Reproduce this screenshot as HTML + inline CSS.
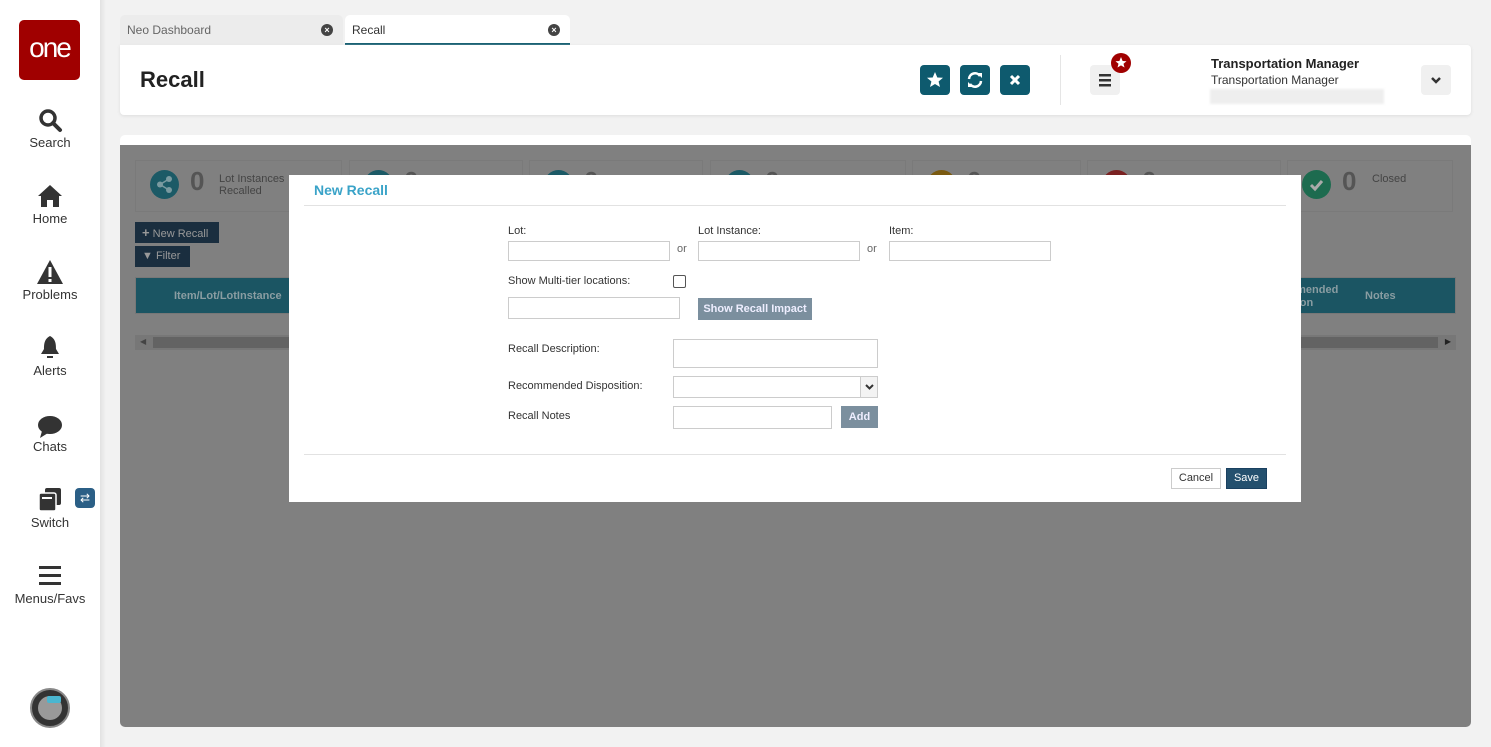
<!DOCTYPE html>
<html><head><meta charset="utf-8"><style>
*{box-sizing:border-box;margin:0;padding:0}
body{width:1491px;height:747px;background:#f2f2f2;font-family:"Liberation Sans",sans-serif;position:relative;overflow:hidden;color:#333}
.abs{position:absolute}
.side{left:0;top:0;width:100px;height:747px;background:#fff}
.nav{position:absolute;left:0;width:100px;text-align:center;font-size:13px;color:#333}
.tab{top:15px;height:30px;border-radius:5px 5px 0 0;font-size:12px;line-height:30px;padding-left:7px}
.x{position:absolute;right:10px;top:9px;width:12px;height:12px;border-radius:50%;background:#444;color:#fff;font-size:9px;line-height:12px;text-align:center;font-weight:bold}
.card{background:#fff}
.hb{top:65px;width:30px;height:30px;border-radius:4px;background:#0e5a6e}
.stat{top:160px;height:52px;border:1px solid #7a7a7a}
.circ{position:absolute;left:14px;top:9px;width:29px;height:29px;border-radius:50%}
.zero{position:absolute;left:54px;top:5px;font-size:26px;font-weight:bold;color:#555}
.lbl{font-size:11px;color:#333}
.inp{position:absolute;border:1px solid #ccc;background:#fff;height:20px}
</style></head><body>
<div class="abs side"></div>
<div class="abs" style="left:19px;top:20px;width:61px;height:60px;background:#a00000;border-radius:5px;color:#fff;font-size:28px;text-align:center;line-height:56px;letter-spacing:-2px">one</div>
<svg class="abs" style="left:38px;top:108px" width="26" height="26" viewBox="0 0 26 26"><circle cx="10" cy="10" r="7" stroke="#333" stroke-width="3.5" fill="none"/><line x1="15" y1="15" x2="22" y2="22" stroke="#333" stroke-width="4" stroke-linecap="round"/></svg>
<div class="nav" style="top:135px">Search</div>
<svg class="abs" style="left:37px;top:184px" width="26" height="24" viewBox="0 0 26 24"><path d="M13 1 L1 12 L4 12 L4 23 L10 23 L10 16 L16 16 L16 23 L22 23 L22 12 L25 12 Z" fill="#333"/></svg>
<div class="nav" style="top:211px">Home</div>
<svg class="abs" style="left:36px;top:259px" width="28" height="26" viewBox="0 0 28 26"><path d="M14 1 L27 25 L1 25 Z" fill="#333"/><rect x="12.5" y="8" width="3" height="10" fill="#fff"/><rect x="12.5" y="20" width="3" height="3" fill="#fff"/></svg>
<div class="nav" style="top:287px">Problems</div>
<svg class="abs" style="left:39px;top:335px" width="22" height="26" viewBox="0 0 22 26"><path d="M11 1 C5 4 5 10 5 14 L2 19 L20 19 L17 14 C17 10 17 4 11 1Z" fill="#333"/><rect x="8" y="21" width="6" height="2" fill="#333"/></svg>
<div class="nav" style="top:363px">Alerts</div>
<svg class="abs" style="left:37px;top:415px" width="26" height="24" viewBox="0 0 26 24"><ellipse cx="13" cy="10" rx="12" ry="9" fill="#333"/><path d="M5 16 L3 23 L11 18Z" fill="#333"/></svg>
<div class="nav" style="top:439px">Chats</div>
<svg class="abs" style="left:37px;top:487px" width="26" height="26" viewBox="0 0 26 26"><rect x="8" y="1" width="16" height="17" rx="2" fill="#333"/><rect x="2" y="6" width="17" height="18" rx="2" fill="#333" stroke="#fff" stroke-width="1.5"/><rect x="5" y="10" width="10" height="2" fill="#fff"/></svg>
<div class="abs" style="left:75px;top:488px;width:20px;height:20px;border-radius:4px;background:#2b5f86;color:#fff;font-size:12px;text-align:center;line-height:20px">⇄</div>
<div class="nav" style="top:515px">Switch</div>
<svg class="abs" style="left:39px;top:566px" width="22" height="20"><rect y="0" width="22" height="3" fill="#333"/><rect y="8" width="22" height="3" fill="#333"/><rect y="16" width="22" height="3" fill="#333"/></svg>
<div class="nav" style="top:591px">Menus/Favs</div>
<div class="abs" style="left:30px;top:688px;width:40px;height:40px;border-radius:50%;background:#333;border:2px solid #888"><div style="margin:6px;width:24px;height:24px;border-radius:50%;background:#999"><div style="margin:5px 0 0 9px;width:14px;height:7px;background:#4ab6d0;border-radius:2px"></div></div></div>
<div class="abs" style="left:100px;top:0;width:6px;height:747px;background:linear-gradient(to right,#e2e2e2,#f2f2f2)"></div>

<div class="abs tab" style="left:120px;width:223px;background:#ececec;color:#666">Neo Dashboard<span class="x">×</span></div>
<div class="abs tab" style="left:345px;width:225px;background:#fff;color:#333;border-bottom:2px solid #0e5a6e">Recall<span class="x">×</span></div>
<div class="abs card" style="left:120px;top:45px;width:1351px;height:70px;border-radius:0 4px 4px 4px;box-shadow:0 1px 3px #ddd"></div>
<div class="abs" style="left:140px;top:67px;font-size:22px;font-weight:bold;color:#222">Recall</div>
<div class="abs hb" style="left:920px"><svg width="30" height="30" viewBox="0 0 30 30"><path d="M15 7 L17.3 12.5 L23 12.8 L18.6 16.5 L20 22 L15 19 L10 22 L11.4 16.5 L7 12.8 L12.7 12.5Z" fill="#fff"/></svg></div>
<div class="abs hb" style="left:960px"><svg width="30" height="30" viewBox="0 0 30 30"><path d="M9 14 A6 6 0 0 1 20 11" stroke="#fff" stroke-width="2.5" fill="none"/><path d="M21 16 A6 6 0 0 1 10 19" stroke="#fff" stroke-width="2.5" fill="none"/><path d="M17 8 L22 8 L22 13Z" fill="#fff"/><path d="M13 22 L8 22 L8 17Z" fill="#fff"/></svg></div>
<div class="abs hb" style="left:1000px"><svg width="30" height="30"><path d="M11 11 L19 19 M19 11 L11 19" stroke="#fff" stroke-width="3"/></svg></div>
<div class="abs" style="left:1060px;top:55px;width:1px;height:50px;background:#e5e5e5"></div>
<div class="abs" style="left:1090px;top:65px;width:30px;height:30px;border-radius:4px;background:#f0f0f0"><svg width="30" height="30"><rect x="9" y="9" width="12" height="2.5" fill="#333"/><rect x="9" y="14" width="12" height="2.5" fill="#333"/><rect x="9" y="19" width="12" height="2.5" fill="#333"/></svg></div>
<div class="abs" style="left:1111px;top:53px;width:20px;height:20px;border-radius:50%;background:#a00000"><svg width="20" height="20"><path d="M10 4 L11.6 8 L15.5 8.2 L12.5 10.7 L13.5 14.5 L10 12.4 L6.5 14.5 L7.5 10.7 L4.5 8.2 L8.4 8Z" fill="#fff"/></svg></div>
<div class="abs" style="left:1211px;top:56px;font-size:13px;font-weight:bold;color:#222">Transportation Manager</div>
<div class="abs" style="left:1211px;top:73px;font-size:12px;color:#333">Transportation Manager</div>
<div class="abs" style="left:1210px;top:89px;width:174px;height:15px;background:#eee;filter:blur(1px)"></div>
<div class="abs" style="left:1421px;top:65px;width:30px;height:30px;border-radius:4px;background:#f0f0f0"><svg width="30" height="30"><path d="M11 13 L15 17 L19 13" stroke="#333" stroke-width="2.5" fill="none"/></svg></div>

<div class="abs" style="left:120px;top:135px;width:1351px;height:592px;background:#808080;border-radius:5px;overflow:hidden;border-top:10px solid #fff"></div>
<div class="abs stat" style="left:135px;width:207px"><div class="circ" style="background:#1c5a66"><svg width="29" height="29"><circle cx="10" cy="14.5" r="3" fill="#7a9aa0"/><circle cx="19" cy="9" r="3" fill="#7a9aa0"/><circle cx="19" cy="20" r="3" fill="#7a9aa0"/><path d="M10 14.5 L19 9 M10 14.5 L19 20" stroke="#7a9aa0" stroke-width="1.5"/></svg></div><div class="zero">0</div><div style="position:absolute;left:83px;top:12px;font-size:11px;color:#444;line-height:12px">Lot Instances<br>Recalled</div></div>
<div class="abs stat" style="left:349px;width:174px"><div class="circ" style="background:#1c5a66"></div><div class="zero">0</div></div>
<div class="abs stat" style="left:529px;width:174px"><div class="circ" style="background:#1c5a66"></div><div class="zero">0</div></div>
<div class="abs stat" style="left:710px;width:196px"><div class="circ" style="background:#1c5a66"></div><div class="zero">0</div></div>
<div class="abs stat" style="left:912px;width:169px"><div class="circ" style="background:#7a5a10"></div><div class="zero">0</div></div>
<div class="abs stat" style="left:1087px;width:194px"><div class="circ" style="background:#7a2222"></div><div class="zero">0</div></div>
<div class="abs stat" style="left:1287px;width:166px"><div class="circ" style="background:#1d6b4f"><svg width="29" height="29"><path d="M9 15 L13 19 L20 11" stroke="#aaa" stroke-width="3" fill="none"/></svg></div><div class="zero">0</div><div style="position:absolute;left:84px;top:12px;font-size:11px;color:#444">Closed</div></div>
<div class="abs" style="left:135px;top:222px;width:84px;height:21px;background:#1a2e3f;color:#999;font-size:11px;line-height:21px;padding-left:7px"><b style="font-size:13px">+</b> New Recall</div>
<div class="abs" style="left:135px;top:246px;width:55px;height:21px;background:#1a2e3f;color:#999;font-size:11px;line-height:21px;padding-left:7px">▼ Filter</div>
<div class="abs" style="left:135px;top:277px;width:1321px;height:37px;background:#1b5563;border:1px solid #777"><span style="position:absolute;left:38px;top:12px;font-size:11px;font-weight:bold;color:#8a9da2">Item/Lot/LotInstance</span><span style="position:absolute;left:1154px;top:6px;font-size:11px;font-weight:bold;color:#8a9da2;line-height:13px">amended<br>ition</span><span style="position:absolute;left:1229px;top:12px;font-size:11px;font-weight:bold;color:#8a9da2">Notes</span></div>
<div class="abs" style="left:135px;top:335px;width:1321px;height:15px;background:#777"><div style="margin:2px 18px;height:11px;background:#636363"></div><span style="position:absolute;left:5px;top:2px;font-size:8px;color:#444">◀</span><span style="position:absolute;right:5px;top:2px;font-size:8px;color:#222">▶</span></div>

<div class="abs" style="left:289px;top:175px;width:1012px;height:327px;background:#fff"></div>
<div class="abs" style="left:314px;top:182px;font-size:14px;font-weight:bold;color:#3aa3c8">New Recall</div>
<div class="abs" style="left:304px;top:205px;width:982px;height:1px;background:#e2e2e2"></div>
<div class="abs lbl" style="left:508px;top:225px">Lot:</div>
<div class="abs lbl" style="left:698px;top:225px">Lot Instance:</div>
<div class="abs lbl" style="left:889px;top:225px">Item:</div>
<div class="inp" style="left:508px;top:241px;width:162px"></div>
<div class="abs lbl" style="left:677px;top:243px;color:#666">or</div>
<div class="inp" style="left:698px;top:241px;width:162px"></div>
<div class="abs lbl" style="left:867px;top:243px;color:#666">or</div>
<div class="inp" style="left:889px;top:241px;width:162px"></div>
<div class="abs lbl" style="left:508px;top:275px">Show Multi-tier locations:</div>
<div class="abs" style="left:673px;top:275px;width:13px;height:13px;border:1px solid #555;border-radius:2px"></div>
<div class="inp" style="left:508px;top:297px;width:172px;height:22px"></div>
<div class="abs" style="left:698px;top:298px;width:114px;height:22px;background:#7b8f9e;color:#eef;font-size:11px;font-weight:bold;text-align:center;line-height:22px">Show Recall Impact</div>
<div class="abs lbl" style="left:508px;top:343px">Recall Description:</div>
<div class="inp" style="left:673px;top:339px;width:205px;height:29px"></div>
<div class="abs lbl" style="left:508px;top:380px">Recommended Disposition:</div>
<div class="inp" style="left:673px;top:376px;width:205px;height:22px"><div style="position:absolute;right:0;top:0;width:17px;height:20px;border-left:1px solid #ccc;background:#f3f3f3"><svg width="17" height="20"><path d="M5 8 L8.5 11.5 L12 8" stroke="#333" stroke-width="2" fill="none"/></svg></div></div>
<div class="abs lbl" style="left:508px;top:410px">Recall Notes</div>
<div class="inp" style="left:673px;top:406px;width:159px;height:23px"></div>
<div class="abs" style="left:841px;top:406px;width:37px;height:22px;background:#7b8f9e;color:#eef;font-size:11px;font-weight:bold;text-align:center;line-height:22px">Add</div>
<div class="abs" style="left:304px;top:454px;width:982px;height:1px;background:#e2e2e2"></div>
<div class="abs" style="left:1171px;top:468px;width:50px;height:21px;border:1px solid #ccc;font-size:11px;text-align:center;line-height:19px;color:#333">Cancel</div>
<div class="abs" style="left:1226px;top:468px;width:41px;height:21px;background:#24506e;border:1px solid #1a4060;color:#fff;font-size:11px;text-align:center;line-height:19px">Save</div>
</body></html>
